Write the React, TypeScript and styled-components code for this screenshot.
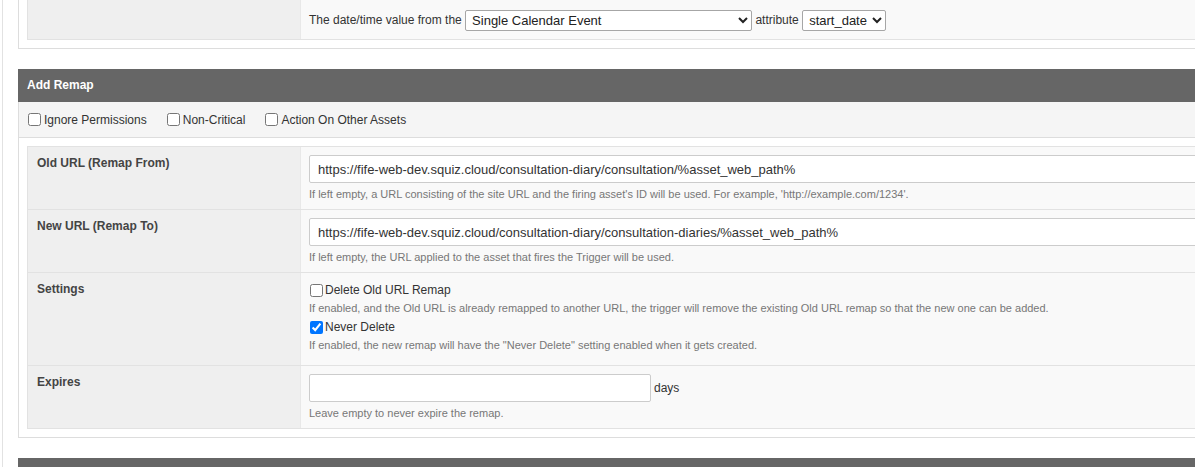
import styled, { createGlobalStyle } from "styled-components";

const GlobalStyle = createGlobalStyle`
  html, body {
    margin: 0;
    padding: 0;
    background: #ffffff;
    overflow: hidden;
  }
  body {
    font-family: "Liberation Sans", Arial, sans-serif;
    color: #333;
  }
`;

const App = () => {
  return (
    <>
      <GlobalStyle />
      <Page>
        <Outer>
          <Box $continued>
            <Table $continued>
              <Row>
                <LabelCell />
                <ValueCell $compact>
                  <InlineText>
                    The date/time value from the{" "}
                    <Select defaultValue="event" $width={287}>
                      <option value="event">Single Calendar Event</option>
                    </Select>{" "}
                    attribute{" "}
                    <Select defaultValue="start_date" $width={84}>
                      <option value="start_date">start_date</option>
                    </Select>
                  </InlineText>
                </ValueCell>
              </Row>
            </Table>
          </Box>

          <Section>
            <SectionHeader>Add Remap</SectionHeader>
            <Box>
              <OptionBar>
                <BarOption>
                  <Check type="checkbox" />
                  Ignore Permissions
                </BarOption>
                <BarOption>
                  <Check type="checkbox" />
                  Non-Critical
                </BarOption>
                <BarOption>
                  <Check type="checkbox" />
                  Action On Other Assets
                </BarOption>
              </OptionBar>
              <BoxBody>
                <Table>
                  <Row>
                    <LabelCell>Old URL (Remap From)</LabelCell>
                    <ValueCell>
                      <TextInput
                        type="text"
                        defaultValue="https://fife-web-dev.squiz.cloud/consultation-diary/consultation/%asset_web_path%"
                      />
                      <Help>
                        If left empty, a URL consisting of the site URL and the firing asset's ID will
                        be used. For example, 'http://example.com/1234'.
                      </Help>
                    </ValueCell>
                  </Row>
                  <Row>
                    <LabelCell>New URL (Remap To)</LabelCell>
                    <ValueCell>
                      <TextInput
                        type="text"
                        defaultValue="https://fife-web-dev.squiz.cloud/consultation-diary/consultation-diaries/%asset_web_path%"
                      />
                      <Help>If left empty, the URL applied to the asset that fires the Trigger will be used.</Help>
                    </ValueCell>
                  </Row>
                  <Row>
                    <LabelCell>Settings</LabelCell>
                    <ValueCell $extraBottom={5}>
                      <CheckLine>
                        <Check type="checkbox" $inCell />
                        Delete Old URL Remap
                      </CheckLine>
                      <Help $tight>
                        If enabled, and the Old URL is already remapped to another URL, the trigger
                        will remove the existing Old URL remap so that the new one can be added.
                      </Help>
                      <CheckLine $spaced>
                        <Check type="checkbox" $inCell defaultChecked />
                        Never Delete
                      </CheckLine>
                      <Help $tight>
                        If enabled, the new remap will have the "Never Delete" setting enabled when it
                        gets created.
                      </Help>
                    </ValueCell>
                  </Row>
                  <Row>
                    <LabelCell>Expires</LabelCell>
                    <ValueCell>
                      <InputLine>
                        <TextInput type="text" $width={342} />
                        <Unit>days</Unit>
                      </InputLine>
                      <Help>Leave empty to never expire the remap.</Help>
                    </ValueCell>
                  </Row>
                </Table>
              </BoxBody>
            </Box>
          </Section>

          <Section>
            <SectionHeader />
          </Section>
        </Outer>
      </Page>
    </>
  );
};

const Page = styled.div`
  width: 1400px;
  padding-left: 2px;
`;

const Outer = styled.div`
  border-left: 1px solid #e2e2e2;
  padding-left: 15px;
  display: flex;
  flex-direction: column;
  row-gap: 20px;
  min-height: 480px;
`;

const Section = styled.section`
  display: flex;
  flex-direction: column;
`;

const SectionHeader = styled.div`
  height: 33px;
  line-height: 33px;
  padding: 0 9px;
  background: #666666;
  color: #ffffff;
  font-size: 12px;
  font-weight: bold;
`;

const Box = styled.div<{ $continued?: boolean }>`
  border: 1px solid #dddddd;
  border-top: ${(p) => (p.$continued ? "none" : "0")};
  padding: ${(p) => (p.$continued ? "0 8px 8px" : "0")};
  background: #ffffff;
`;

const OptionBar = styled.div`
  display: flex;
  align-items: center;
  column-gap: 20px;
  height: 35px;
  padding: 0 9px;
  background: #f5f5f5;
  border-bottom: 1px solid #dddddd;
`;

const BarOption = styled.label`
  display: flex;
  align-items: center;
  font-size: 12px;
  color: #333;
`;

const Check = styled.input<{ $inCell?: boolean }>`
  width: 13px;
  height: 13px;
  margin: ${(p) => (p.$inCell ? "0 2px 0 1px" : "0 3px 0 0")};
  flex: none;
`;

const BoxBody = styled.div`
  padding: 8px;
`;

const Table = styled.div<{ $continued?: boolean }>`
  display: flex;
  flex-direction: column;
  border: 1px solid #e2e2e2;
  border-top: ${(p) => (p.$continued ? "none" : "1px solid #e2e2e2")};
  border-right: none;
`;

const Row = styled.div`
  display: grid;
  grid-template-columns: 272px 1fr;
  border-bottom: 1px solid #e2e2e2;

  &:last-child {
    border-bottom: none;
  }
`;

const LabelCell = styled.div`
  background: #efefef;
  padding: 8px 9px;
  font-size: 12px;
  line-height: 16px;
  font-weight: bold;
  color: #444;
`;

const ValueCell = styled.div<{ $compact?: boolean; $extraBottom?: number }>`
  background: #f9f9f9;
  border-left: 1px solid #e8e8e8;
  padding: ${(p) => (p.$compact ? "10px 8px 8px" : `8px 8px ${8 + (p.$extraBottom ?? 0)}px`)};
  min-width: 0;
`;

const InlineText = styled.div`
  font-size: 12px;
  color: #333;
  line-height: 21px;
  white-space: nowrap;
`;

const Select = styled.select<{ $width: number }>`
  width: ${(p) => p.$width}px;
  height: 21px;
  font-family: "Liberation Sans", Arial, sans-serif;
  font-size: 13px;
  color: #222;
  background: #ffffff;
  border: 1px solid #a6a6a6;
  border-radius: 2px;
  padding: 0 2px;
  vertical-align: top;
`;

const TextInput = styled.input<{ $width?: number }>`
  box-sizing: border-box;
  width: ${(p) => (p.$width ? `${p.$width}px` : "960px")};
  height: 28px;
  padding: 0 8px;
  border: 1px solid #cccccc;
  border-radius: 2px;
  background: #ffffff;
  font-family: "Liberation Sans", Arial, sans-serif;
  font-size: 13px;
  color: #333;
  outline: none;
`;

const InputLine = styled.div`
  display: flex;
  align-items: center;
  column-gap: 3px;
`;

const Unit = styled.span`
  font-size: 12px;
  color: #333;
`;

const Help = styled.div<{ $tight?: boolean }>`
  margin-top: ${(p) => (p.$tight ? "2px" : "4px")};
  font-size: 11px;
  line-height: 14px;
  color: #777;
`;

const CheckLine = styled.label<{ $spaced?: boolean }>`
  display: flex;
  align-items: center;
  height: 18px;
  margin-top: ${(p) => (p.$spaced ? "3px" : "0")};
  font-size: 12px;
  color: #333;
`;

export default App;
